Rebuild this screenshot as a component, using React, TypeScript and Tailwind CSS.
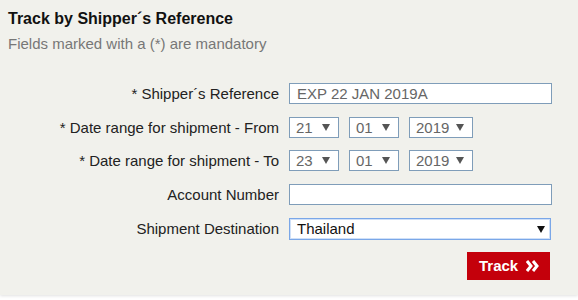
const rows = [
  { label: "* Shipper´s Reference", kind: "text", value: "EXP 22 JAN 2019A", mt: "mt-0" },
  { label: "* Date range for shipment - From", kind: "date", value: ["21", "01", "2019"], mt: "mt-[13px]" },
  { label: "* Date range for shipment - To", kind: "date", value: ["23", "01", "2019"], mt: "mt-[12px]" },
  { label: "Account Number", kind: "text", value: "", mt: "mt-[13px]" },
];

function Arrow({ className }: { className: string }) {
  return (
    <svg width="8" height="7" viewBox="0 0 8 7" className={className}>
      <path d="M0 0 H8 L4 7 Z" fill="currentColor" />
    </svg>
  );
}

function DateBox({ value, width }: { value: string; width: string }) {
  return (
    <div className={`${width} h-[21px] flex items-center justify-between pl-[6px] pr-[8px] bg-white border border-[#7f9db9] text-[#666]`}>
      <span>{value}</span>
      <Arrow className="text-[#555]" />
    </div>
  );
}

export default function App() {
  return (
    <div className="w-[578px] h-[300px] bg-white font-['Liberation_Sans',Arial,sans-serif] text-[15px] leading-[20px]">
      <div className="h-[295px] bg-[#f1f1ec] shadow-[0_1px_3px_rgba(0,0,0,0.12)]">
        <div className="px-2 pt-[9px]">
          <h1 className="text-[16px] font-bold text-[#111]">Track by Shipper´s Reference</h1>
          <p className="mt-[5px] text-[#777]">Fields marked with a (*) are mandatory</p>
        </div>

        <div className="mt-[29px] flex flex-col">
          {rows.map((row, i) => (
            <div key={i} className={`${row.mt} flex items-center h-[21px]`}>
              <label className="w-[279px] text-right text-[#222] whitespace-nowrap">{row.label}</label>
              <div className="ml-[10px] flex gap-[10px]">
                {row.kind === "text" ? (
                  <div className="w-[263px] h-[21px] flex items-center px-[7px] bg-white border border-[#7f9db9] text-[#666]">
                    {row.value as string}
                  </div>
                ) : (
                  <>
                    <DateBox value={(row.value as string[])[0]} width="w-[50px]" />
                    <DateBox value={(row.value as string[])[1]} width="w-[50px]" />
                    <DateBox value={(row.value as string[])[2]} width="w-[64px]" />
                  </>
                )}
              </div>
            </div>
          ))}

          <div className="mt-[13px] flex items-center h-[22px]">
            <label className="w-[279px] text-right text-[#222]">Shipment Destination</label>
            <div className="ml-[10px] w-[262px] h-[22px] flex items-center justify-between pl-[7px] pr-[5px] bg-white border border-[#7aa7e8] shadow-[inset_0_0_0_1px_#cfe0f8] text-[#111]">
              <span>Thailand</span>
              <Arrow className="text-[#111]" />
            </div>
          </div>
        </div>

        <div className="mt-[12px] flex justify-end pr-[28px]">
          <button className="w-[83px] h-[28px] flex items-center pl-[12px] gap-[8px] bg-[#c4000b] text-white font-bold text-[15px]">
            Track
            <svg width="14" height="12" viewBox="0 0 14 12">
              <path d="M1 1 L5 6 L1 11 M7 1 L11 6 L7 11" fill="none" stroke="#fff" strokeWidth="3" strokeLinejoin="miter" />
            </svg>
          </button>
        </div>
      </div>
    </div>
  );
}
